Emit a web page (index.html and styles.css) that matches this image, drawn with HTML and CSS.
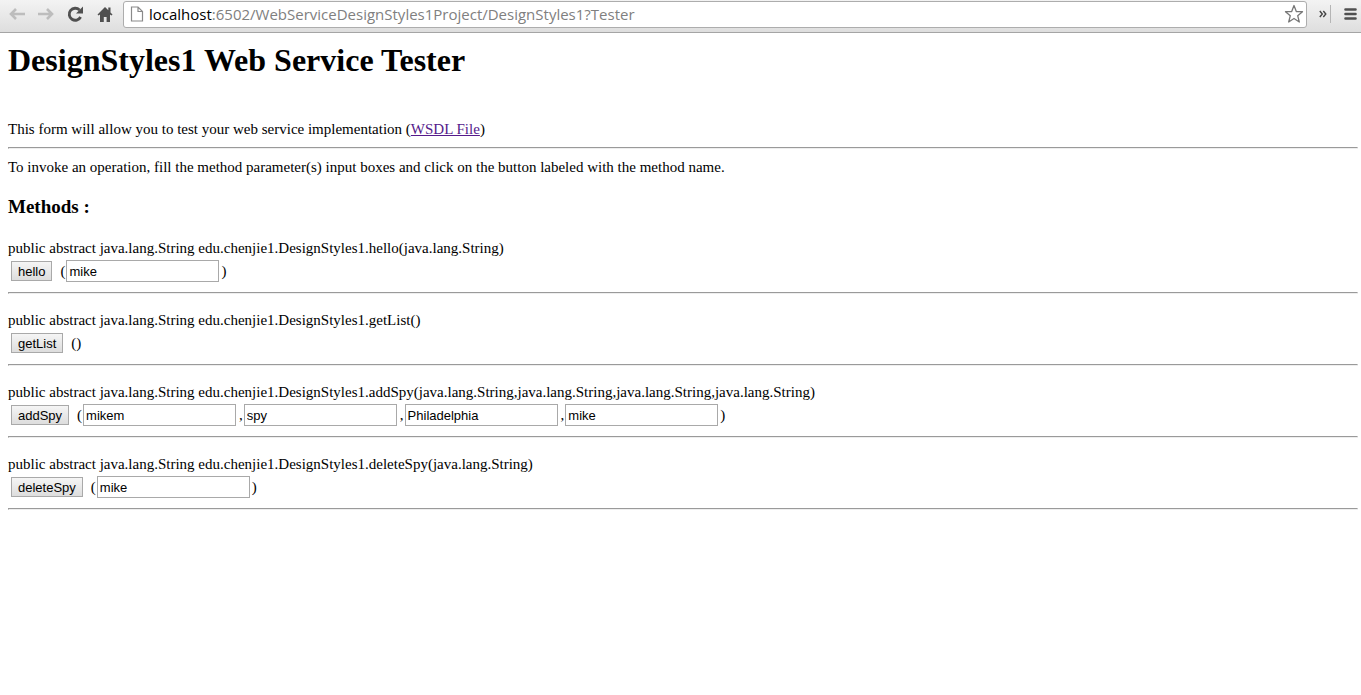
FILE: index.html
```html
<!DOCTYPE html>
<html lang="en">
<head>
<meta charset="utf-8">
<title>DesignStyles1 Web Service Tester</title>
<link rel="stylesheet" href="styles.css">
</head>
<body>
<header class="toolbar">
  <button class="tool nav" aria-label="Back"><svg width="18" height="16" viewBox="0 0 18 16"><path d="M8 3 3 8l5 5M3.500 8H17" fill="none" stroke="#bdbdbd" stroke-width="2.600"/></svg></button>
  <button class="tool nav" aria-label="Forward"><svg width="18" height="16" viewBox="0 0 18 16"><path d="M10 3 15 8l-5 5M14.500 8H1" fill="none" stroke="#bdbdbd" stroke-width="2.600"/></svg></button>
  <button class="tool nav" aria-label="Reload"><svg width="18" height="18" viewBox="0 0 18 18"><path d="M14.600 12A6 6 0 1 1 13.500 5" fill="none" stroke="#505050" stroke-width="2.800"/><path d="M17 1.500v7H10z" fill="#505050"/></svg></button>
  <button class="tool home" aria-label="Home"><svg width="16" height="18" viewBox="0 0 16 18"><path d="M8 2 .5 9.500l1 1L3 9.500V17h3.800v-5h2.800v5H13V9.500l1.500 1 1-1L13.500 7.500V2.500H11.300V5.200z" fill="#505050"/></svg></button>
  <div class="omnibox">
    <svg width="14" height="16" viewBox="0 0 14 16"><path d="M1.500 1h6.500l4.500 4.500V15h-11zM8 1v4.500h4.500" fill="#fff" stroke="#8a8a8a" stroke-width="1.200"/></svg>
    <div class="url"><span class="host">localhost</span>:6502/WebServiceDesignStyles1Project/DesignStyles1?Tester</div>
    <button class="tool star" aria-label="Bookmark"><svg width="20" height="20" viewBox="0 0 20 20"><path d="M10 1.500 12.300 7.500 18.500 7.700 13.700 11.700 15.300 18 10 14.500 4.700 18 6.300 11.700 1.500 7.700 7.700 7.500z" fill="#fff" stroke="#777" stroke-width="1.300" stroke-linejoin="round"/></svg></button>
  </div>
  <button class="tool more" aria-label="More extensions"><svg width="8" height="8" viewBox="0 0 8 8"><path d="M.8 1 3.300 4 .8 7M4.300 1 6.800 4 4.300 7" fill="none" stroke="#444" stroke-width="1.400"/></svg></button>
  <button class="tool menu" aria-label="Menu"><svg width="13" height="14" viewBox="0 0 13 14"><path d="M1.500 2.500h10M1.500 7h10M1.500 11.500h10" stroke="#505050" stroke-width="2.600" stroke-linecap="round"/></svg></button>
</header>
<main class="page">
  <h1 class="title">DesignStyles1 Web Service Tester</h1>
  <p class="text">This form will allow you to test your web service implementation (<a class="wsdl" href="#wsdl">WSDL File</a>)</p>
  <hr class="rule">
  <p class="text">To invoke an operation, fill the method parameter(s) input boxes and click on the button labeled with the method name.</p>
  <h3 class="heading">Methods :</h3>
  <form class="method">
    <p class="text">public abstract java.lang.String edu.chenjie1.DesignStyles1.hello(java.lang.String)</p>
    <div class="call"><button class="invoke" type="button">hello</button><span>(</span><input class="param" aria-label="hello parameter" value="mike"><span>)</span></div>
    <hr class="rule">
  </form>
  <form class="method">
    <p class="text">public abstract java.lang.String edu.chenjie1.DesignStyles1.getList()</p>
    <div class="call"><button class="invoke" type="button">getList</button><span>()</span></div>
    <hr class="rule">
  </form>
  <form class="method">
    <p class="text">public abstract java.lang.String edu.chenjie1.DesignStyles1.addSpy(java.lang.String,java.lang.String,java.lang.String,java.lang.String)</p>
    <div class="call"><button class="invoke" type="button">addSpy</button><span>(</span><input class="param" aria-label="addSpy parameter 1" value="mikem"><span class="comma">,</span><input class="param" aria-label="addSpy parameter 2" value="spy"><span class="comma">,</span><input class="param" aria-label="addSpy parameter 3" value="Philadelphia"><span class="comma">,</span><input class="param" aria-label="addSpy parameter 4" value="mike"><span>)</span></div>
    <hr class="rule">
  </form>
  <form class="method">
    <p class="text">public abstract java.lang.String edu.chenjie1.DesignStyles1.deleteSpy(java.lang.String)</p>
    <div class="call"><button class="invoke" type="button">deleteSpy</button><span>(</span><input class="param" aria-label="deleteSpy parameter" value="mike"><span>)</span></div>
    <hr class="rule">
  </form>
</main>
</body>
</html>
```
FILE: styles.css
```css
* { box-sizing: border-box; }
body { margin: 0; background: #fff; color: #000; font-family: "Liberation Serif", "Times New Roman", serif; font-size: 15px; line-height: 18px; }
.toolbar { display: flex; align-items: center; height: 33px; padding: 0 4px 4px 8px; background: linear-gradient(#f3f3f3, #dedede); border-bottom: 1px solid #a5a5a5; }
.tool { display: flex; align-items: center; justify-content: center; flex: none; padding: 0; border: 0; background: none; }
.nav { width: 29px; height: 28px; justify-content: flex-start; }
.home { width: 28px; height: 28px; padding-left: 2px; justify-content: flex-start; }
.omnibox { display: flex; flex: 1; align-items: center; gap: 5px; min-width: 0; height: 27px; padding: 0 2px 0 6px; background: #fff; border: 1px solid #adadad; border-radius: 3px; }
.url { flex: 1; min-width: 0; overflow: hidden; white-space: nowrap; color: #808080; font-family: "Open Sans", sans-serif; font-size: 15px; line-height: 20px; }
.host { color: #000; }
.star { width: 20px; height: 28px; }
.more { width: 24px; height: 18px; padding-left: 8px; border-right: 1px solid #b5b5b5; }
.menu { width: 26px; height: 28px; justify-content: flex-end; }
.page { padding: 9px 3px 8px 8px; }
.title { margin: 0 0 41px; font-size: 32px; line-height: 37px; }
.text { margin: 0; }
.wsdl { color: #551a8b; }
.rule { margin: 9px 0; border: 1px solid; border-color: #9a9a9a #eee #eee #9a9a9a; }
.heading { margin: 21px 0 22px; font-size: 19px; line-height: 20px; }
.method { margin-bottom: 17px; }
.call { display: flex; align-items: center; height: 22px; margin: 3px 0 10px; }
.method .rule { margin: 0; }
.invoke { height: 20px; margin: 0 8px 0 3px; padding: 0 6px; border: 1px solid #a9a9a9; background: linear-gradient(#f5f5f5, #dddddd); color: #000; font: 13px "Liberation Sans", Arial, sans-serif; }
.param { width: 153px; height: 22px; margin: 0 2px 0 1px; padding: 0 2px; border: 1px solid #a9a9a9; background: #fff; color: #000; font: 13px "Liberation Sans", Arial, sans-serif; }
.comma { padding-left: 1px; }
```
